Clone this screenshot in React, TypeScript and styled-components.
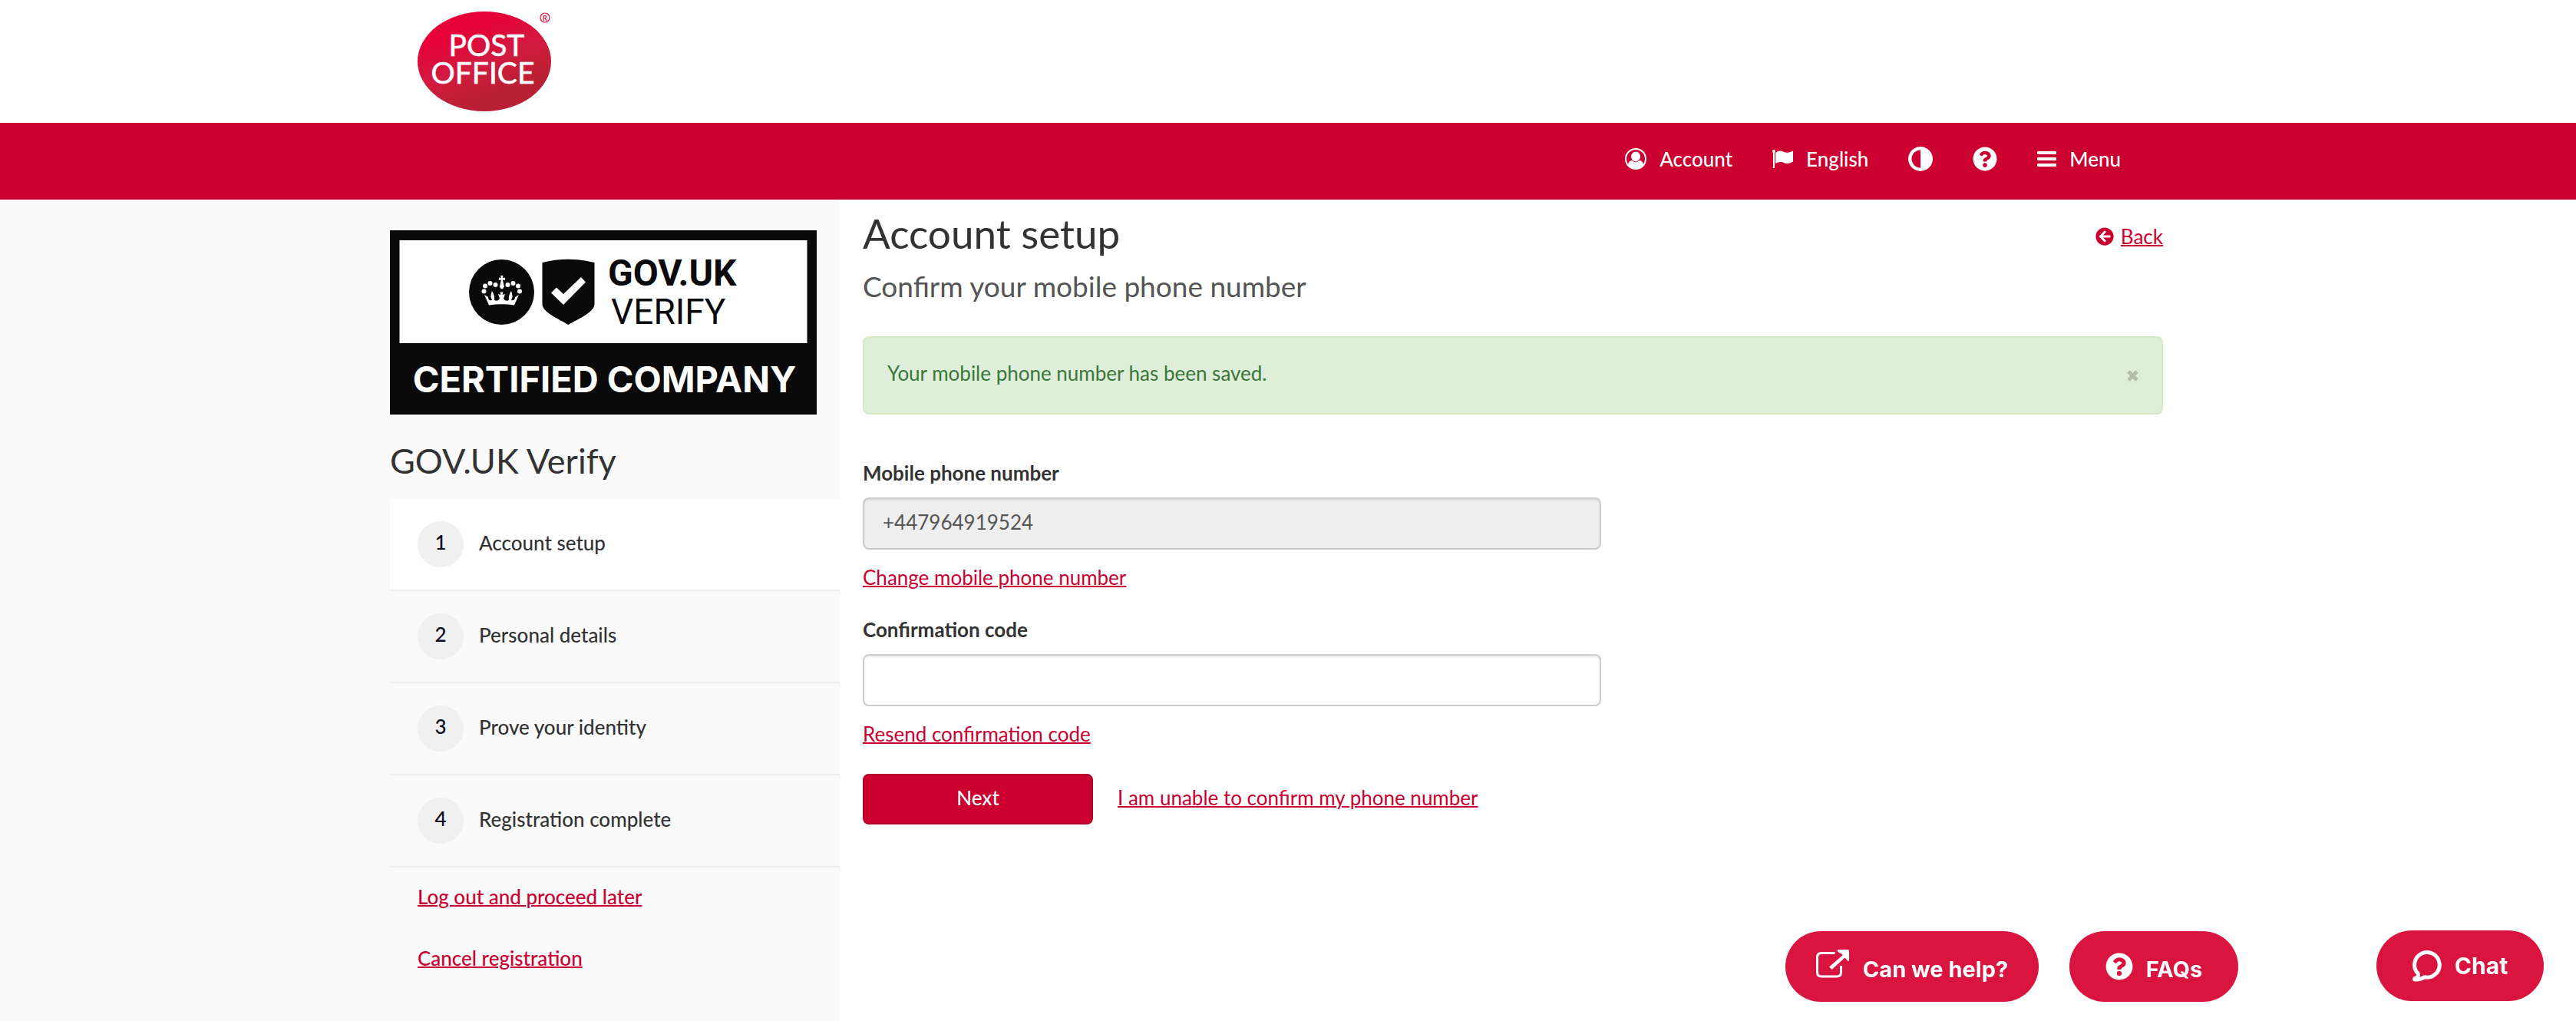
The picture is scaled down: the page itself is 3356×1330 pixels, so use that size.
import React from 'react';
import styled, { createGlobalStyle, css } from 'styled-components';
import { FaQuestionCircle, FaArrowCircleLeft } from 'react-icons/fa';

const color = {
  brand: '#cb0030',
  brandDark: '#b2002a',
  float: '#d8143f',
  text: '#333333',
  muted: '#555555',
  panel: '#fafafa',
  line: '#ededed',
};

const GlobalStyle = createGlobalStyle`
  *, *::before, *::after { box-sizing: border-box; }
  body {
    margin: 0;
    background: #ffffff;
    color: ${color.text};
    font-family: Lato, "Liberation Sans", sans-serif;
    font-size: 26px;
    line-height: 36px;
  }
  h1, h2, h3, p, ol, ul { margin: 0; padding: 0; font-weight: 400; }
  ol, ul { list-style: none; }
  button, input { font: inherit; }
  svg { display: block; flex: none; }
`;

const Page = styled.div`
  min-height: 100vh;
  display: flex;
  flex-direction: column;
`;

const gutter = css`
  padding-left: max(32px, calc(50vw - 1136px));
  padding-right: max(32px, calc(50vw - 1085px));
`;

const Masthead = styled.header`
  ${gutter}
  padding-top: 12px;
  height: 160px;
`;

const NavBar = styled.nav`
  ${gutter}
  height: 100px;
  padding-bottom: 6px;
  background: ${color.brand};
  display: flex;
  justify-content: flex-end;
  align-items: center;
  gap: 52px;
`;

const NavLink = styled.a`
  display: flex;
  align-items: center;
  gap: 17px;
  color: #ffffff;
  font-weight: 500;
  text-decoration: none;
`;

const Columns = styled.div`
  flex: 1;
  display: grid;
  grid-template-columns: calc(50% - 584px) 1fr;
`;

const Sidebar = styled.aside`
  background: ${color.panel};
  padding: 40px 0 40px max(32px, calc(50vw - 1170px));
`;

const SideTitle = styled.h2`
  margin: 32px 0 22px;
  font-size: 45px;
  line-height: 56px;
`;

const Step = styled.li<{ $active?: boolean }>`
  height: 120px;
  padding-left: 36px;
  display: flex;
  align-items: center;
  gap: 20px;
  border-bottom: 2px solid ${color.line};
  background: ${p => (p.$active ? '#ffffff' : 'transparent')};
  font-weight: 500;
`;

const StepNumber = styled.span`
  width: 60px;
  height: 60px;
  padding-bottom: 6px;
  border-radius: 50%;
  display: flex;
  align-items: center;
  justify-content: center;
  background: #f0f0f0;
  color: #0b0c1e;
`;

const StepLabel = styled.span`
  padding-bottom: 4px;
`;

const SideLinks = styled.div`
  padding: 20px 0 0 36px;
  display: flex;
  flex-direction: column;
  align-items: flex-start;
  gap: 44px;
`;

const Link = styled.a<{ $medium?: boolean }>`
  color: ${color.brand};
  font-weight: ${p => (p.$medium ? 500 : 400)};
  text-decoration: underline;
  text-decoration-thickness: 2px;
`;

const Main = styled.main`
  padding: 14px max(32px, calc(50vw - 1140px)) 40px 30px;
`;

const TitleRow = styled.div`
  display: flex;
  justify-content: space-between;
  align-items: center;
`;

const Title = styled.h1`
  font-size: 53px;
  line-height: 60px;
`;

const Subtitle = styled.h2`
  margin-top: 16px;
  font-size: 37px;
  line-height: 46px;
  color: ${color.muted};
`;

const BackGroup = styled.div`
  padding-top: 8px;
  display: flex;
  align-items: center;
  gap: 9px;
  color: ${color.brand};
`;

const Alert = styled.div`
  margin: 42px 0 58px;
  height: 102px;
  padding: 0 30px 6px;
  display: flex;
  align-items: center;
  justify-content: space-between;
  border: 2px solid #d6e9c6;
  border-radius: 8px;
  background: #dfeed8;
  color: #3a763c;
`;

const Close = styled.button`
  padding: 6px 0 0;
  border: 0;
  background: none;
  color: #b2beac;
`;

const Form = styled.form`
  max-width: 962px;
  display: flex;
  flex-direction: column;
`;

const Field = styled.div`
  display: flex;
  flex-direction: column;
  align-items: flex-start;
  margin-bottom: 32px;
`;

const Label = styled.label`
  margin-bottom: 14px;
  font-weight: 700;
`;

const TextInput = styled.input`
  width: 100%;
  height: 68px;
  margin-bottom: 18px;
  padding: 0 24px 4px;
  border: 2px solid #cccccc;
  border-radius: 8px;
  background: #ffffff;
  color: ${color.muted};
  box-shadow: inset 0 2px 2px rgba(0, 0, 0, 0.075);
  &:disabled { background: #eeeeee; }
`;

const Actions = styled.div`
  padding-top: 2px;
  display: flex;
  align-items: baseline;
  gap: 32px;
`;

const NextButton = styled.button`
  width: 300px;
  height: 66px;
  padding: 0 0 4px;
  border: 2px solid ${color.brandDark};
  border-radius: 8px;
  background: ${color.brand};
  color: #ffffff;
  font-weight: 500;
`;

const Floating = styled.div`
  position: fixed;
  right: 42px;
  bottom: 24px;
  display: flex;
  align-items: center;
  gap: 40px;
`;

const ChatSlot = styled.div`
  margin-left: 140px;
  padding-bottom: 2px;
`;

const Pill = styled.button<{ $width: number }>`
  width: ${p => p.$width}px;
  height: 92px;
  border: 0;
  border-radius: 46px;
  display: flex;
  align-items: center;
  justify-content: center;
  gap: 17px;
  background: ${color.float};
  color: #ffffff;
  font-family: Inter, "Liberation Sans", sans-serif;
  font-size: 30px;
  font-weight: 700;
`;

const PillText = styled.span`
  padding-top: 8px;
  font-size: 29px;
`;

const PostOfficeLogo = () => (
  <svg width="176" height="136" viewBox="542 12 176 136" role="img" aria-label="Post Office">
    <defs>
      <linearGradient id="oval" x1="0.25" y1="0.05" x2="0.7" y2="0.95">
        <stop offset="0.15" stopColor="#e60037" />
        <stop offset="0.5" stopColor="#d31a40" />
        <stop offset="0.85" stopColor="#b92033" />
      </linearGradient>
    </defs>
    <ellipse cx="631" cy="80" rx="87" ry="65" fill="url(#oval)" />
    <text fill="#fff" stroke="#fff" strokeWidth=".6" fontFamily="Lato, sans-serif" fontSize="39" textAnchor="middle">
      <tspan x="634" y="72.500">POST</tspan>
      <tspan x="629" y="108.500">OFFICE</tspan>
    </text>
    <circle cx="710" cy="23" r="6" fill="none" stroke="#e00f40" strokeWidth="1.200" />
    <text x="710" y="26.500" fill="#e00f40" fontFamily="Lato, sans-serif" fontSize="9" fontWeight="700" textAnchor="middle">R</text>
  </svg>
);

const CertifiedLogo = () => (
  <svg width="556" height="240" viewBox="508 300 556 240" role="img" aria-label="GOV.UK Verify certified company">
    <rect x="508" y="300" width="556" height="240" fill="#0a0a0a" />
    <rect x="520.500" y="313" width="531" height="134" fill="#fff" />
    <circle cx="653.500" cy="380.500" r="42.500" fill="#0a0a0a" />
    <g fill="#fff">
      <path d="M631 384 L637 397.500 Q653.500 395 670 397.500 L676 384 L671 387 Q671 392 666 391 Q669 386 666 379 Q662 385 663 391 Q658 393 656 389 L658 383 L654.500 384 L655.500 380.500 H651.500 L652.500 384 L649 383 L651 389 Q649 393 644 391 Q645 385 641 379 Q638 386 641 391 Q636 392 636 387 Z" />
      <path d="M652 359 h3.500 l-.6 3 l3-.6 v3.600 l-3-.6 l2 9 q-3 6 -6 0 l2-9 l-3 .6 v-3.600 l3 .6 z" />
      <circle cx="630.500" cy="379.500" r="3" /><circle cx="632" cy="372.500" r="3" /><circle cx="638.500" cy="369" r="3" /><circle cx="645.500" cy="371" r="3" />
      <circle cx="677" cy="379.500" r="3" /><circle cx="675" cy="372.500" r="3" /><circle cx="668.500" cy="369" r="3" /><circle cx="661.500" cy="371" r="3" />
    </g>
    <path d="M706.500 342 Q740.500 333.500 774.500 342 V396 C774.500 407 752 416 740.500 423 C729 416 706.500 407 706.500 396 Z" fill="#0a0a0a" />
    <path d="M718 381.500 L725 374.500 L734 383 L757 361 L763 367.500 L734 397 Z" fill="#fff" />
    <g fill="#0a0a0a" fontFamily="Roboto, sans-serif">
      <text x="792" y="371.500" fontSize="48" fontWeight="700">GOV.UK</text>
      <text x="796" y="421.500" fontSize="46" fontWeight="400">VERIFY</text>
    </g>
    <text x="787.500" y="511" fill="#fff" textAnchor="middle" fontFamily="Inter, sans-serif" fontSize="47" fontWeight="700">CERTIFIED COMPANY</text>
  </svg>
);

const UserIcon = () => (
  <svg width="28" height="28" viewBox="0 0 28 28" fill="#fff">
    <circle cx="14" cy="14" r="13" fill="none" stroke="#fff" strokeWidth="2" />
    <ellipse cx="14" cy="11" rx="6" ry="6.500" />
    <path d="M4 22 Q4.500 16.500 9 16 Q14 20.500 19 16 Q23.500 16.500 24 22 Q20 27 14 27 Q8 27 4 22 Z" />
  </svg>
);

const FlagIcon = () => (
  <svg width="27" height="24" viewBox="0 0 27 24" fill="#fff">
    <circle cx="2" cy="2" r="2" />
    <rect x="1" y="2" width="2" height="22" rx=".5" />
    <path d="M4 4 Q9 0 14 2.500 Q20 5.500 27 1.500 V15.500 Q20 20 14 16.500 Q9 15 4 18 Z" />
  </svg>
);

const ContrastIcon = () => (
  <svg width="32" height="32" viewBox="0 0 32 32">
    <path d="M16 0 a16 16 0 1 0 .01 0 Z M16 4.500 V27.500 A11.500 11.500 0 0 1 16 4.500 Z" fill="#fff" fillRule="evenodd" />
  </svg>
);

const MenuIcon = () => (
  <svg width="25" height="20" viewBox="0 0 25 20" fill="#fff">
    <rect width="25" height="4" rx="1" />
    <rect y="8" width="25" height="4" rx="1" />
    <rect y="16" width="25" height="4" rx="1" />
  </svg>
);

const CloseIcon = () => (
  <svg width="15" height="15" viewBox="0 0 15 15">
    <path d="M2 2 L13 13 M13 2 L2 13" stroke="currentColor" strokeWidth="4.800" />
  </svg>
);

const ExternalIcon = () => (
  <svg width="44" height="45" viewBox="0 0 44 45">
    <path d="M24.500 4.500 H7 Q1.500 4.500 1.500 10 V29.500 Q1.500 35 7 35 H27 Q32.500 35 32.500 29.500 V21" fill="none" stroke="#fff" strokeWidth="3" />
    <path d="M28.500 0 H41 Q43 0 43 2 V14 Q42.500 16 41 14.500 L37.500 10.500 L20.500 26 L17 22.500 L35 7 L28 2.500 Q27 .5 28.500 0 Z" fill="#fff" />
  </svg>
);

const ChatIcon = () => (
  <svg width="38" height="41" viewBox="0 0 38 41">
    <path d="M7 30 A16.300 16.300 0 1 1 15.500 34.800 Q10.500 38.500 3 38 Q2 37.500 3 36.500 Q9 35 7 30 Z" fill="none" stroke="#fff" strokeWidth="5" strokeLinejoin="round" />
  </svg>
);

const steps = ['Account setup', 'Personal details', 'Prove your identity', 'Registration complete'];

export default function App() {
  return (
    <>
      <GlobalStyle />
      <Page>
        <Masthead>
          <PostOfficeLogo />
        </Masthead>
        <NavBar>
          <NavLink href="#account"><UserIcon />Account</NavLink>
          <NavLink href="#language"><FlagIcon />English</NavLink>
          <NavLink href="#contrast" aria-label="Contrast"><ContrastIcon /></NavLink>
          <NavLink href="#help" aria-label="Help"><FaQuestionCircle size={32} /></NavLink>
          <NavLink href="#menu"><MenuIcon />Menu</NavLink>
        </NavBar>
        <Columns>
          <Sidebar>
            <CertifiedLogo />
            <SideTitle>GOV.UK Verify</SideTitle>
            <ol>
              {steps.map((label, i) => (
                <Step key={label} $active={i === 0}>
                  <StepNumber>{i + 1}</StepNumber>
                  <StepLabel>{label}</StepLabel>
                </Step>
              ))}
            </ol>
            <SideLinks>
              <Link $medium href="#logout">Log out and proceed later</Link>
              <Link $medium href="#cancel">Cancel registration</Link>
            </SideLinks>
          </Sidebar>
          <Main>
            <TitleRow>
              <Title>Account setup</Title>
              <BackGroup>
                <FaArrowCircleLeft size={24} />
                <Link href="#back">Back</Link>
              </BackGroup>
            </TitleRow>
            <Subtitle>Confirm your mobile phone number</Subtitle>
            <Alert role="status">
              <p>Your mobile phone number has been saved.</p>
              <Close type="button" aria-label="Close"><CloseIcon /></Close>
            </Alert>
            <Form>
              <Field>
                <Label htmlFor="mobile">Mobile phone number</Label>
                <TextInput id="mobile" type="tel" defaultValue="+447964919524" disabled />
                <Link href="#change">Change mobile phone number</Link>
              </Field>
              <Field>
                <Label htmlFor="code">Confirmation code</Label>
                <TextInput id="code" type="text" />
                <Link href="#resend">Resend confirmation code</Link>
              </Field>
              <Actions>
                <NextButton type="button">Next</NextButton>
                <Link href="#unable">I am unable to confirm my phone number</Link>
              </Actions>
            </Form>
          </Main>
        </Columns>
      </Page>
      <Floating>
        <Pill type="button" $width={330}><ExternalIcon /><PillText>Can we help?</PillText></Pill>
        <Pill type="button" $width={220}><FaQuestionCircle size={36} /><PillText>FAQs</PillText></Pill>
        <ChatSlot>
          <Pill type="button" $width={218}><ChatIcon />Chat</Pill>
        </ChatSlot>
      </Floating>
    </>
  );
}
